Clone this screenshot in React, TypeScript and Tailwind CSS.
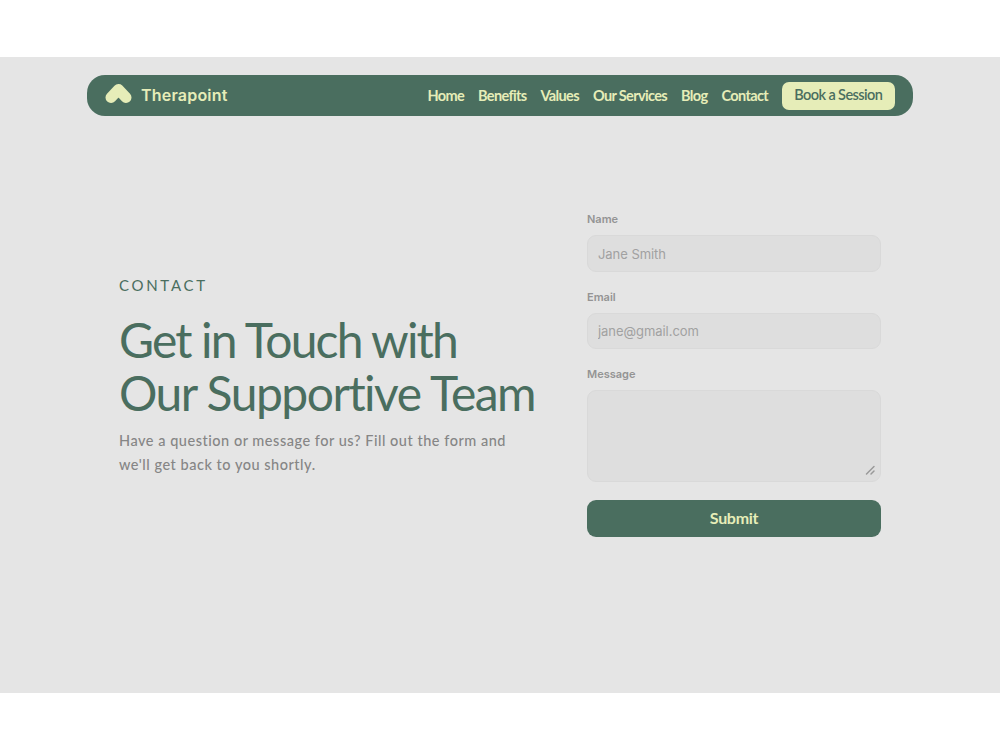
const navLinks = ['Home', 'Benefits', 'Values', 'Our Services', 'Blog', 'Contact'];

function Logo() {
  return (
    <svg className="-mt-[4px]" width="27" height="21" viewBox="0 0 27 21" fill="none" stroke="#e6edb8" strokeWidth="11" strokeLinecap="round" strokeLinejoin="round">
      <path d="M6 14.5 13.5 6.5 21 14.5" />
    </svg>
  );
}

export default function App() {
  return (
    <div className="flex h-[750px] w-[1000px] flex-col bg-white pt-[57px] pb-[57.5px] font-['Lato',sans-serif]">
      <div className="flex-1 bg-[#e5e5e5] pt-[18px]">
        <header className="ml-[87px] flex h-[41px] w-[825.5px] items-center justify-between rounded-[18px] bg-[#4a6e5f] pr-[18px] pl-[18px]">
          <a href="#" className="flex items-center gap-[9px]">
            <Logo />
            <span className="-mt-px font-['Inter',sans-serif] text-[16px] font-semibold tracking-[0.2px] text-[#e6edb8]">Therapoint</span>
          </a>
          <nav className="flex items-center gap-[14px] text-[14.5px] font-bold whitespace-nowrap text-[#e6edb8]">
            {navLinks.map((link) => (
              <a key={link} href="#" className="tracking-[-0.64px]">{link}</a>
            ))}
            <a href="#" className="flex h-[28px] w-[112.5px] items-center justify-center rounded-[7px] bg-[#e6edb8] pb-[2px] font-semibold tracking-[-0.6px] text-[#4a6e5f]">
              Book a Session
            </a>
          </nav>
        </header>

        <main className="flex pl-[119px]">
          <section className="w-[468px] pt-[159px]">
            <p className="text-[15px] leading-[20px] tracking-[2.7px] text-[#4a6e5f]">CONTACT</p>
            <h1 className="mt-[18px] text-[48px] leading-[53px] whitespace-nowrap text-[#4a6e5f]">
              <span className="block tracking-[-1.85px]">Get in Touch with</span>
              <span className="block tracking-[-1.5px]">Our Supportive Team</span>
            </h1>
            <p className="mt-[10px] text-[14.5px] leading-[24px] font-medium tracking-[0.52px] whitespace-nowrap text-[#868686]">
              Have a question or message for us? Fill out the form and
              <br />
              we'll get back to you shortly.
            </p>
          </section>

          <form className="flex w-[294px] flex-col pt-[96px] font-['Inter',sans-serif]">
            <label className="text-[11px] leading-[15px] font-semibold text-[#949494]">Name</label>
            <input
              placeholder="Jane Smith"
              className="mt-[8px] h-[36.5px] rounded-[9px] border border-[#d9d9d9] bg-[#dedede] px-[10px] pt-px text-[13px] tracking-[-0.05px] placeholder:text-[#a1a1a1]"
            />
            <label className="mt-[18px] text-[11px] leading-[15px] font-semibold text-[#949494]">Email</label>
            <input
              placeholder="jane@gmail.com"
              className="mt-[8px] h-[36.5px] rounded-[9px] border border-[#d9d9d9] bg-[#dedede] px-[10px] text-[13px] tracking-[-0.05px] placeholder:text-[#a1a1a1]"
            />
            <label className="mt-[18px] text-[11px] leading-[15px] font-semibold text-[#949494]">Message</label>
            <div className="relative mt-[8px] flex h-[92px]">
              <textarea className="flex-1 resize-none rounded-[9px] border border-[#d9d9d9] bg-[#dedede] p-[10px] text-[13px]" />
              <svg className="absolute right-[5px] bottom-[6px]" width="11" height="11" viewBox="0 0 11 11" stroke="#999999" strokeWidth="1.5" strokeLinecap="round" fill="none">
                <path d="M1.5 9 9 1.5M6 9 9 6" />
              </svg>
            </div>
            <button type="button" className="mt-[18px] h-[37px] rounded-[9px] bg-[#4a6e5f] pb-px font-['Lato',sans-serif] text-[16px] font-bold tracking-[-0.3px] text-[#e6edb8]">
              Submit
            </button>
          </form>
        </main>
      </div>
    </div>
  );
}
